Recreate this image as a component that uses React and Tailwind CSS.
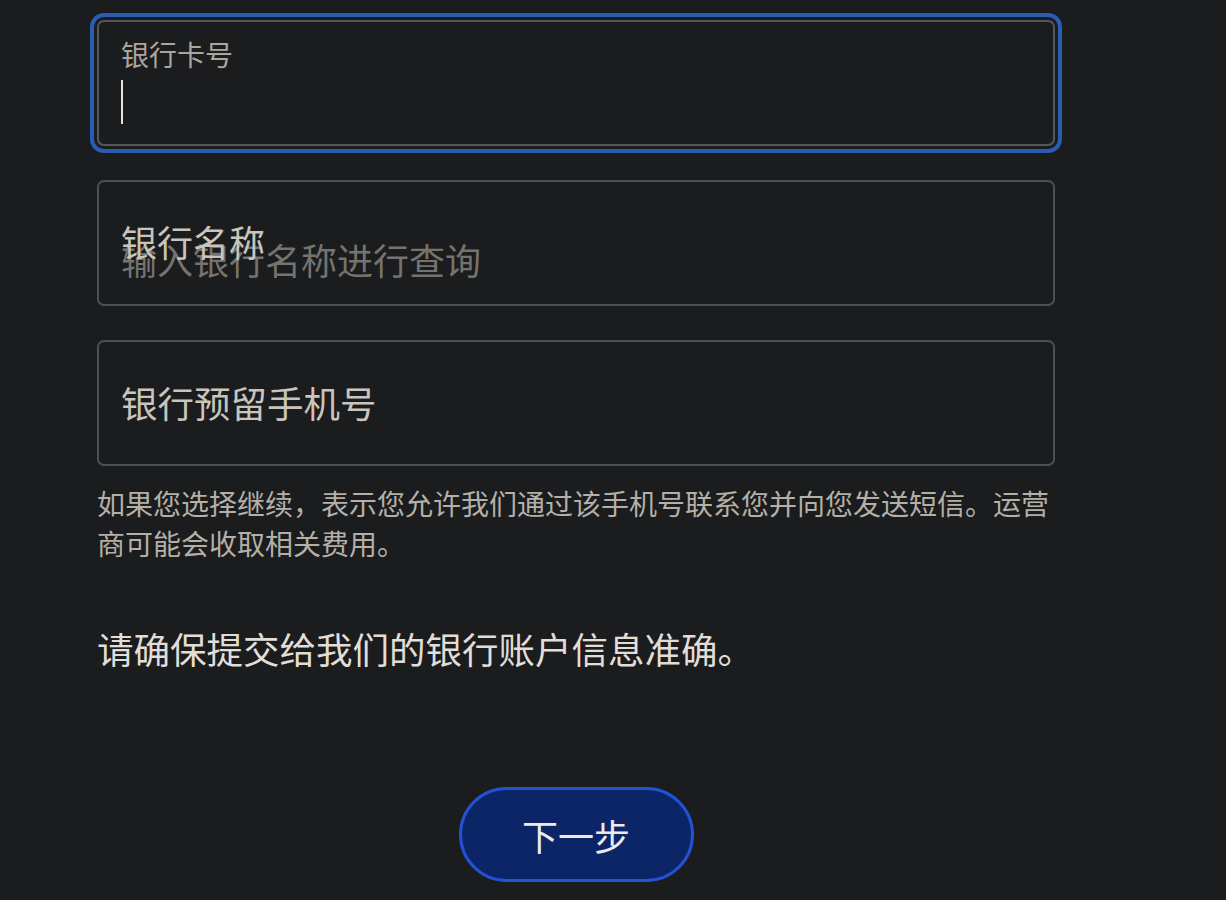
import { useState } from 'react';

const font = { fontFamily: '"Noto Sans CJK SC", "Noto Sans", sans-serif' };

const BankForm = () => {
  const [card, setCard] = useState("");

  return (
    <div className="min-h-screen bg-[#1b1c1e] pt-[20px] pl-[97px]" style={font}>
      <div className="w-[958px] flex flex-col">
        {/* card number, focused */}
        <div className="h-[126px] rounded-[7px] border-2 border-[#55585a] ring-4 ring-[#2a5cb4] ring-offset-[3px] ring-offset-[#1b1c1e] px-[22px] pt-[12px] flex flex-col">
          <label className="text-[28px] leading-[40px] text-[#aaa69e]">银行卡号</label>
          <div className="flex items-center h-[50px] pt-[6px]">
            <div className="w-[2px] h-[44px] bg-[#e2e2e2]" />
            <input value={card} onChange={(e) => setCard(e.target.value)} className="hidden" />
          </div>
        </div>

        {/* bank name, label overlaps placeholder */}
        <div className="relative mt-[34px] h-[126px] rounded-[7px] border-2 border-[#4e5153] px-[22px] pt-[52px]">
          <div className="text-[36px] leading-[50px] text-[#75736e]">输入银行名称进行查询</div>
          <div className="absolute left-[22px] top-[34px] text-[36px] leading-[50px] text-[#c9c5bd]">银行名称</div>
        </div>

        {/* phone */}
        <div className="mt-[34px] h-[126px] rounded-[7px] border-2 border-[#4e5153] px-[22px] flex items-center">
          <span className="text-[36.5px] leading-[50px] text-[#c9c5bd]">银行预留手机号</span>
        </div>

        <p className="mt-[17px] text-[28px] leading-[40px] text-[#b4b0a8]">
          如果您选择继续，表示您允许我们通过该手机号联系您并向您发送短信。运营商可能会收取相关费用。
        </p>

        <p className="mt-[61px] text-[36.5px] leading-[50px] text-[#e2ded7]">请确保提交给我们的银行账户信息准确。</p>

        <div className="mt-[113px] flex justify-center">
          <button className="w-[235px] h-[95px] rounded-full border-[3px] border-[#2452d4] bg-[#0c2567] text-[36px] text-[#ebebeb]">
            下一步
          </button>
        </div>
      </div>
    </div>
  );
};

export default BankForm;
